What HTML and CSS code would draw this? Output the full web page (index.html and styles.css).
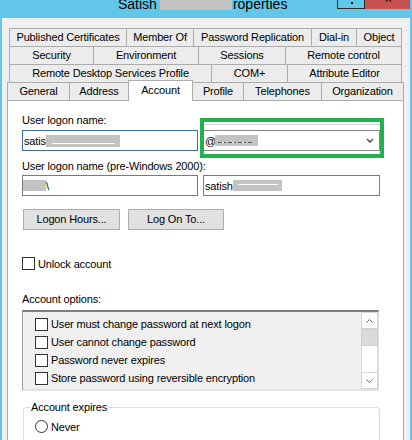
FILE: index.html
```html
<!DOCTYPE html>
<html>
<head>
<meta charset="utf-8">
<title>Properties</title>
<link rel="stylesheet" href="styles.css">
</head>
<body>
<div class="window">
  <div class="titlebar">
    <div class="title">
      <span>Satish</span><span class="redact title-redact"></span><span>roperties</span>
    </div>
    <div class="controls">
      <div class="btn-min"><i></i></div>
      <div class="btn-close">
        <svg width="45" height="9" viewBox="0 0 45 9"><path d="M19 -6 L26 1.5 M28 -6 L21 1.5" stroke="#2a1a1a" stroke-width="1.3" fill="none"/></svg>
      </div>
    </div>
  </div>

  <div class="dlg">
    <div class="tabs">
      <div class="tab-row back">
        <div class="tab t-pub">Published Certificates</div>
        <div class="tab t-mem">Member Of</div>
        <div class="tab t-pwd">Password Replication</div>
        <div class="tab t-dial">Dial-in</div>
        <div class="tab t-obj">Object</div>
      </div>
      <div class="tab-row back">
        <div class="tab t-sec">Security</div>
        <div class="tab t-env">Environment</div>
        <div class="tab t-ses">Sessions</div>
        <div class="tab t-rc">Remote control</div>
      </div>
      <div class="tab-row back">
        <div class="tab t-rds">Remote Desktop Services Profile</div>
        <div class="tab t-com">COM+</div>
        <div class="tab t-attr">Attribute Editor</div>
      </div>
      <div class="tab-row front">
        <div class="tab t-gen">General</div>
        <div class="tab t-addr">Address</div>
        <div class="tab active t-acc">Account</div>
        <div class="tab t-prof">Profile</div>
        <div class="tab t-tel">Telephones</div>
        <div class="tab t-org">Organization</div>
      </div>
    </div>

    <div class="panel">
      <div class="lbl">User logon name:</div>
      <div class="row row-1">
        <div class="textbox focus">
          <span>satis</span><span class="redact r-logon"><i class="redact-line"></i></span>
        </div>
        <div class="textbox combo">
          <span>@</span><span class="redact r-domain"><i class="redact-dash"></i></span>
          <svg class="chev" width="8" height="5" viewBox="0 0 8 5"><path d="M1 1 L4 4 L7 1" stroke="#555" stroke-width="1.6" fill="none"/></svg>
          <div class="highlight"><div class="highlight-line"></div></div>
        </div>
      </div>

      <div class="lbl lbl-2">User logon name (pre-Windows 2000):</div>
      <div class="row row-2">
        <div class="textbox">
          <span class="redact r-netbios"></span><span>\</span>
        </div>
        <div class="textbox">
          <span>satish</span><span class="redact r-sam"><i class="redact-line"></i></span>
        </div>
      </div>

      <div class="btns">
        <div class="btn b-hours">Logon Hours...</div>
        <div class="btn b-logon">Log On To...</div>
      </div>

      <div class="check-row unlock">
        <span class="checkbox"></span><span>Unlock account</span>
      </div>

      <div class="lbl lbl-opts">Account options:</div>
      <div class="listbox">
        <div class="items">
          <div class="item"><span class="checkbox"></span><span>User must change password at next logon</span></div>
          <div class="item"><span class="checkbox"></span><span>User cannot change password</span></div>
          <div class="item"><span class="checkbox"></span><span>Password never expires</span></div>
          <div class="item"><span class="checkbox"></span><span>Store password using reversible encryption</span></div>
        </div>
        <div class="scrollbar">
          <div class="sb-btn">
            <svg width="7" height="4" viewBox="0 0 7 4"><path d="M0.5 3.5 L3.5 0.5 L6.5 3.5" stroke="#606060" stroke-width="1" fill="none"/></svg>
          </div>
          <div class="sb-thumb"></div>
          <div class="sb-track"></div>
          <div class="sb-btn">
            <svg width="7" height="4" viewBox="0 0 7 4"><path d="M0.5 0.5 L3.5 3.5 L6.5 0.5" stroke="#606060" stroke-width="1" fill="none"/></svg>
          </div>
        </div>
      </div>

      <fieldset class="group">
        <legend>Account expires</legend>
        <div class="radio-row"><span class="radio"></span><span>Never</span></div>
      </fieldset>
    </div>
  </div>
</div>
</body>
</html>
```
FILE: styles.css
```css
html, body {
  margin: 0;
  padding: 0;
}
body {
  width: 412px;
  height: 440px;
  overflow: hidden;
  background: #62c6e9;
  font-family: "Liberation Sans", Arial, sans-serif;
  font-size: 11px;
  letter-spacing: -0.15px;
  color: #000;
}
.window {
  display: flex;
  flex-direction: column;
  height: 440px;
}

/* title bar */
.titlebar {
  flex: none;
  height: 18px;
  display: flex;
  align-items: flex-start;
}
.title {
  display: flex;
  align-items: flex-start;
  margin: -5px 0 0 118px;
  font-size: 14px;
  line-height: 18px;
  letter-spacing: 0;
  white-space: nowrap;
}
.title-redact {
  width: 72px;
  height: 10px;
  margin: 5px 1px 0 3px;
}
.controls {
  margin-left: auto;
  margin-right: 2px;
  display: flex;
}
.btn-min {
  box-sizing: border-box;
  width: 28px;
  height: 9px;
  border: 1px solid #2a2a2a;
  border-top: none;
}
.btn-min i {
  display: block;
  width: 2px;
  height: 2px;
  background: #000;
  margin: 2px 0 0 13px;
}
.btn-close {
  width: 45px;
  height: 9px;
  background: #c75050;
}
.btn-close svg { display: block; }

/* dialog body */
.dlg {
  flex: 1;
  min-height: 0;
  margin: 0 2px;
  padding: 10px 6px 0 5px;
  background: #f0f0f0;
  display: flex;
  flex-direction: column;
  overflow: hidden;
}

/* tabs */
.tabs {
  display: flex;
  flex-direction: column;
  flex: none;
}
.tab-row {
  display: flex;
  height: 18px;
}
.tab-row.back { margin: 0 2px; }
.tab-row.front { align-items: flex-end; }
.tab {
  flex: none;
  box-sizing: border-box;
  height: 18px;
  border: solid #acacac;
  border-width: 1px 0 0 1px;
  background: #ececec;
  text-align: center;
  line-height: 17px;
  white-space: nowrap;
}
.tab:last-child { border-right-width: 1px; }
.tab.active {
  height: 21px;
  margin-bottom: -1px;
  border-right-width: 1px;
  background: #fff;
  line-height: 18px;
  position: relative;
  z-index: 2;
}
.tab.active + .tab { margin-left: -1px; }

.t-pub { width: 117px; }
.t-mem { width: 67px; }
.t-pwd { width: 118px; }
.t-dial { width: 45px; }
.t-obj { width: 46px; }
.t-sec { width: 84px; }
.t-env { width: 105px; }
.t-ses { width: 87px; }
.t-rc { width: 117px; }
.t-rds { width: 202px; }
.t-com { width: 76px; }
.t-attr { width: 115px; }
.t-gen { width: 62px; }
.t-addr { width: 59px; }
.t-acc { width: 65px; }
.t-prof { width: 51px; }
.t-tel { width: 78px; }
.t-org { width: 83px; }

/* panel */
.panel {
  flex: none;
  height: 400px;
  background: #fff;
  border: 1px solid #acacac;
  padding: 12px 0 0 14px;
}
.lbl {
  height: 14px;
  line-height: 14px;
  white-space: nowrap;
}
.lbl-2 { margin-top: 8px; }
.lbl-opts { margin-top: 22px; }

.row {
  display: flex;
  gap: 5px;
}
.row-1 { margin-top: 3px; }
.row-2 { margin-top: 2px; }

.textbox {
  box-sizing: border-box;
  width: 176px;
  height: 21px;
  border: 1px solid #7a7a7a;
  padding-left: 1px;
  display: flex;
  align-items: center;
  white-space: nowrap;
}
.textbox.focus { border-color: #3c6e9e; }
.textbox.combo {
  width: 177px;
  position: relative;
  border-color: #8a8a8a;
}
.row-2 .textbox + .textbox { width: 177px; }

.redact {
  display: block;
  flex: none;
  background: #c3c3c3;
}
.redact i { display: block; }
.r-logon { width: 74px; height: 12px; }
.r-logon .redact-line { height: 1px; margin: 8px 5px 0 6px; background: #fff; }
.r-domain { width: 43px; height: 11px; margin-left: -1px; }
.redact-dash {
  height: 1px;
  margin: 7px 6px 0 3px;
  background: repeating-linear-gradient(90deg, #5a5a5a 0 4px, #fff 4px 6px, #5a5a5a 6px 8px, #c3c3c3 8px 10px);
}
.r-netbios { width: 23px; height: 11px; margin-left: -1px; }
.r-sam { width: 49px; height: 11px; }
.r-sam .redact-line { height: 1px; margin: 4px 4px 0 5px; background: #fff; }

.chev {
  display: block;
  margin-left: auto;
  margin-right: 5px;
}
.highlight {
  position: absolute;
  left: -4px;
  top: -13px;
  width: 184px;
  height: 40px;
  box-sizing: border-box;
  border: 4px solid #22b14c;
  pointer-events: none;
}
.highlight-line {
  height: 1px;
  margin-top: 2px;
  background: #d4d4d4;
}

/* buttons */
.btns {
  display: flex;
  gap: 8px;
  margin: 13px 0 0 1px;
}
.btn {
  box-sizing: border-box;
  height: 21px;
  border: 1px solid #adadad;
  background: #e1e1e1;
  text-align: center;
  line-height: 19px;
}
.b-hours { width: 97px; }
.b-logon { width: 96px; }

/* checkboxes */
.checkbox {
  display: block;
  flex: none;
  box-sizing: border-box;
  width: 13px;
  height: 13px;
  border: 1px solid #333;
  background: #fff;
}
.check-row {
  display: flex;
  align-items: center;
  gap: 3px;
  height: 13px;
  white-space: nowrap;
}
.unlock { margin-top: 27px; }

/* list box */
.listbox {
  box-sizing: border-box;
  width: 357px;
  height: 81px;
  margin-top: 4px;
  border-style: solid;
  border-width: 2px 1px 2px 1px;
  border-color: #7e7e7e #dcdcdc #e3e3e3 #a0a0a0;
  background: #f0f0f0;
  display: flex;
}
.items {
  flex: 1;
  padding: 3px 0 0 12px;
}
.item {
  display: flex;
  align-items: center;
  gap: 3px;
  height: 18px;
  white-space: nowrap;
}
.scrollbar {
  flex: none;
  width: 17px;
  display: flex;
  flex-direction: column;
  background: #fff;
  box-shadow: inset 1px 0 0 #dcdcdc, inset -1px 0 0 #dcdcdc;
}
.sb-btn {
  box-sizing: border-box;
  height: 17px;
  border: 1px solid #d6d6d6;
  background: #fff;
  display: flex;
  align-items: center;
  justify-content: center;
}
.sb-btn svg { display: block; }
.sb-thumb {
  box-sizing: border-box;
  height: 17px;
  background: #dadada;
  border: 1px solid #d0d0d0;
}
.sb-track { flex: 1; }

/* group box */
.group {
  box-sizing: border-box;
  width: 357px;
  min-width: 0;
  height: 80px;
  margin: 9px 0 0 1px;
  padding: 0;
  border: 1px solid #dcdcdc;
  border-radius: 3px;
}
.group legend {
  margin-left: 6px;
  padding: 0 1px;
  line-height: 14px;
  white-space: nowrap;
}
.radio-row {
  display: flex;
  align-items: center;
  gap: 3px;
  height: 13px;
  margin: 6px 0 0 11px;
  white-space: nowrap;
}
.radio {
  display: block;
  flex: none;
  box-sizing: border-box;
  width: 13px;
  height: 13px;
  border: 1px solid #333;
  border-radius: 50%;
  background: #fff;
}
```
